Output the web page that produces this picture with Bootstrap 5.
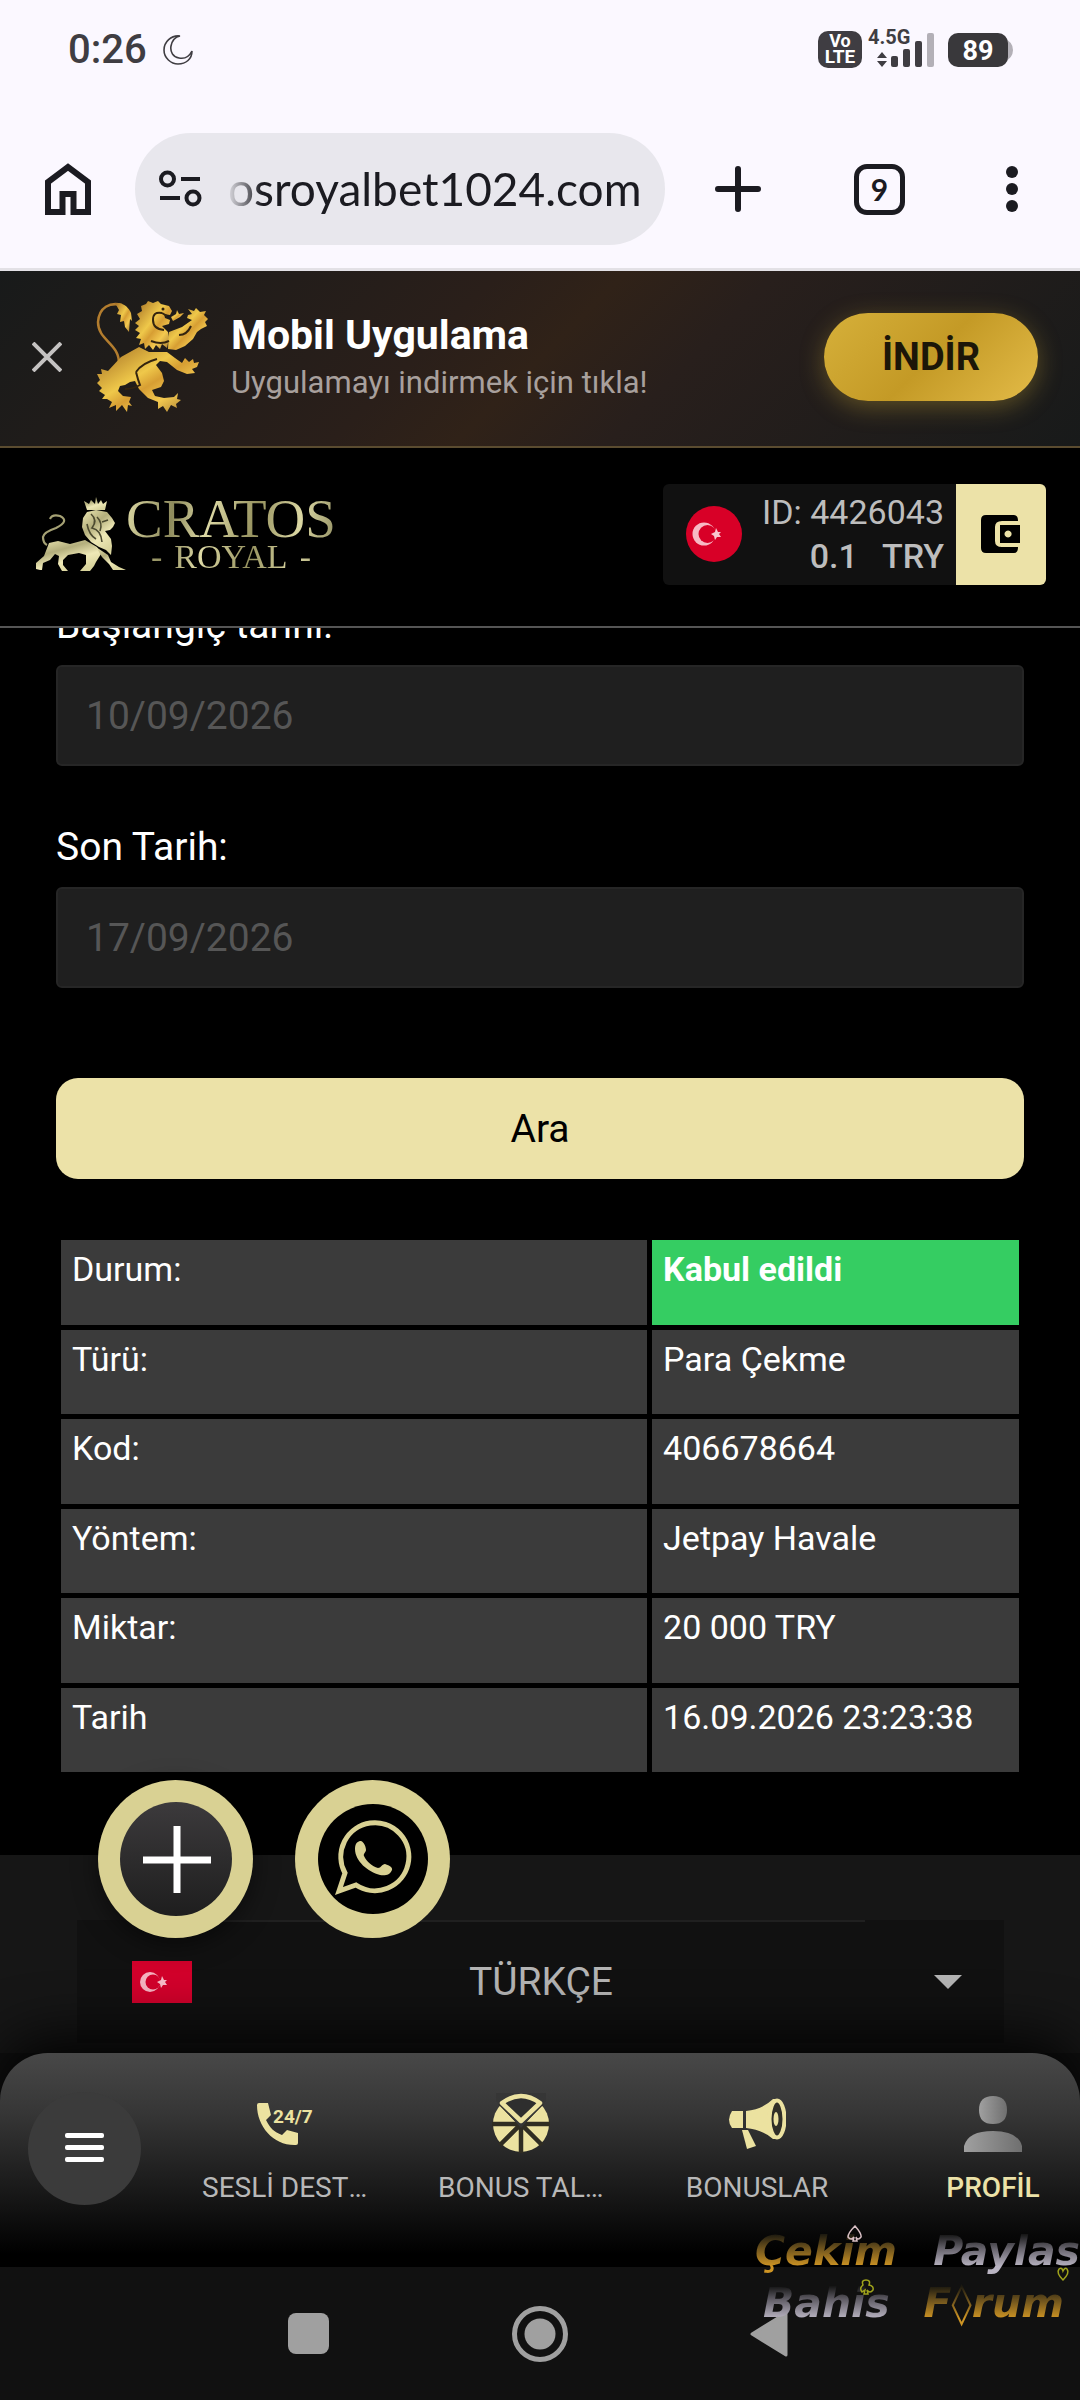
<!DOCTYPE html>
<html lang="tr">
<head>
<meta charset="utf-8">
<meta name="viewport" content="width=device-width, initial-scale=1">
<title>Cratos Royal</title>
<link href="https://cdn.jsdelivr.net/npm/bootstrap@5.3.0/dist/css/bootstrap.min.css" rel="stylesheet">
<style>
  body { font-family: Roboto, "Liberation Sans", sans-serif; background: #000; color: #fff; font-size: 34px; line-height: 44px; }
  svg { display: block; flex: none; }
  a { text-decoration: none; color: inherit; }
  button { border: 0; padding: 0; background: none; color: inherit; flex: none; }

  /* phone status bar and browser toolbar */
  .chrome-top { background: #fbf8ff; color: #1b1b21; border-bottom: 3px solid #e3e1e6; }
  .status-bar { height: 100px; padding: 0 66px 0 68px; color: #3f3d42; }
  .clock { font-size: 40px; font-weight: 500; }
  .status-icon { margin-bottom: 4px; }
  .status-icon text { font-family: Roboto, sans-serif; font-weight: 700; }
  .toolbar { height: 168px; padding: 10px 62px 0 45px; gap: 44px; }
  .tool-group { gap: 93px; padding-left: 6px; }
  .omnibox { height: 112px; border-radius: 56px; background: #e8e7ed; padding: 0 24px; }
  .url { font-family: Lato, sans-serif; font-size: 46px; line-height: 60px; width: 100%; text-align: right; border: 0; background: none; color: #1b1b21; outline: 0;
    -webkit-mask-image: linear-gradient(90deg, transparent 0, #000 36px); mask-image: linear-gradient(90deg, transparent 0, #000 36px); }
  .tabs-count { width: 51px; height: 51px; border: 5px solid #1b1b21; border-radius: 13px; font: 700 30px/40px Lato, sans-serif; }

  /* app install banner */
  .app-banner { height: 177px; padding: 0 42px 4px 32px; background: linear-gradient(135deg, #181a1a 0%, #2a1f1a 40%, #302218 50%, #281f1c 62%, #181a1a 100%); border-bottom: 2px solid #5b4c30; }
  .banner-lion { margin: 0 23px 0 34px; }
  .banner-title { font-size: 41px; font-weight: 700; line-height: 52px; }
  .banner-sub { font-size: 31px; line-height: 44px; color: #a8a09d; }
  .btn-get { width: 214px; height: 88px; border-radius: 44px; background: linear-gradient(135deg, #d6b03a, #c49a26 50%, #e3bb48); color: #1c1608; font-size: 38px; font-weight: 700; box-shadow: 0 6px 24px rgba(212, 175, 55, .35); }

  /* site header */
  .site-header { height: 180px; padding: 0 34px 6px 36px; border-bottom: 2px solid #555; }
  .brand-text { font-family: "Liberation Serif", serif; background: linear-gradient(100deg, #ddd9a4, #8d8a5c 22%, #dedaa6 38%, #96925f 60%, #dbd7a3 80%, #8b885c); -webkit-background-clip: text; background-clip: text; color: transparent; }
  .brand-main { font-size: 55px; line-height: 46px; }
  .brand-sub { font-size: 34px; line-height: 30px; gap: 12px; }
  .account { height: 101px; background: #111; border-radius: 6px; overflow: hidden; color: #bdbdbd; }
  .account-flag { margin: 0 20px 0 23px; }
  .wallet { width: 90px; background: #ece2a8; }

  /* search form and result table */
  .history { overflow: hidden; padding: 0 56px 78px; }
  .scrolled { margin-top: -25px; }
  .field-label { font-size: 39px; line-height: 44px; margin-bottom: 18px; display: block; }
  .date-input, .date-input:focus { height: 101px; border: 2px solid #262626; border-radius: 6px; background: #1f1f1f; color: #565656; font-size: 39px; padding: 0 28px; box-shadow: none; }
  .field-gap { margin-top: 59px; }
  .btn-search { height: 101px; margin-top: 90px; border-radius: 22px; background: #ece2a8; color: #000; font-size: 39px; }
  .result { width: 100%; height: 542px; margin-top: 56px; border-collapse: separate; border-spacing: 5px; table-layout: fixed; }
  .result th, .result td { background: #3b3b3b; vertical-align: top; padding: 7px 11px; font-weight: 400; }
  .result th { width: 61.5%; }
  .result .accepted { background: #35cd62; font-weight: 700; }

  /* footer with the language picker */
  .site-footer { background: #161616; padding: 65px 76px 10px 77px; }
  .lang-box { height: 123px; padding: 0 42px 0 55px; background: #111; }
  .lang-box::before { content: ""; position: absolute; top: 0; left: 15%; right: 15%; height: 2px; background: #202020; }
  .lang-select { appearance: none; border: 0; background: none; color: #b4b4b4; font-size: 39px; text-align: center; text-align-last: center; margin-right: 44px; min-width: 0; }
  .floaters { position: absolute; left: 98px; top: -75px; gap: 42px; z-index: 2; }
  .floater { width: 155px; height: 158px; border-radius: 50%; background: #d9d193; }
  .floater-dark { box-shadow: 0 6px 24px rgba(0, 0, 0, .5); }

  /* bottom navigation */
  .dock-wrap { background: #101010; }
  .dock { position: relative; height: 214px; border-radius: 48px 48px 0 0; background: linear-gradient(#484848, #363636 28%, #161616 68%, #000 94%); box-shadow: 0 -12px 60px #000; overflow: hidden; }
  .menu-btn { width: 113px; height: 113px; border-radius: 50%; background: #3b3b3b; margin: 0 26px 24px 28px; }
  .dock-item { flex: 0 0 236px; padding-top: 40px; font-size: 28px; line-height: 34px; color: #b8b8b8; }
  .dock-item svg { margin-bottom: 18px; }
  .dock-label { width: 166px; }
  .dock-item.current { color: #ece2a8; font-weight: 500; }
  .system-nav { height: 133px; background: #111; position: relative; padding: 0 290px 0 288px; }

  /* forum signature laid over the lower right corner */
  .forum-sign { position: absolute; right: 0; top: -42px; width: 325px; font: italic 700 41px/52px "DejaVu Sans", sans-serif; z-index: 3; pointer-events: none; }
  .gold, .silver { -webkit-background-clip: text; background-clip: text; color: transparent; }
  .gold { background-image: linear-gradient(#1d1a10 18%, #6e531d 45%, #cf9524 80%); }
  .silver { background-image: linear-gradient(#161616 18%, #65626b 45%, #b9b4c2 80%); }
  .forum-sign .suits { position: absolute; inset: 0; }
</style>
<script src="https://cdn.jsdelivr.net/npm/bootstrap@5.3.0/dist/js/bootstrap.bundle.min.js"></script>
</head>
<body class="d-flex flex-column min-vh-100">

<div class="chrome-top">
  <div class="status-bar d-flex align-items-center">
    <span class="clock">0:26</span>
    <svg class="ms-3" width="30" height="30" viewBox="0 0 30 30" fill="none" stroke="#3f3d42" stroke-width="1.6"><path d="M17 1C8 0 1 7 1 15s7 14 14 14c8 0 14-5 14-13-3 6-8 8-13 7C10 22 7 17 8 11c1-5 4-9 9-10z"/></svg>
    <svg class="status-icon ms-auto" width="196" height="44" viewBox="0 0 196 44">
      <rect x="0" y="5" width="44" height="37" rx="10" fill="#3f3d42"/>
      <text x="22" y="21" font-size="18" text-anchor="middle" fill="#fff">Vo</text>
      <text x="22" y="37" font-size="19" text-anchor="middle" fill="#fff">LTE</text>
      <text x="50" y="18" font-size="20" fill="#3f3d42">4.5G</text>
      <g fill="#3f3d42"><path d="M59 32l5-6 5 6zM59 35h10l-5 6z"/><rect x="73" y="30" width="7" height="11" rx="2"/><rect x="85" y="23" width="7" height="18" rx="2"/><rect x="97" y="15" width="7" height="26" rx="2"/></g>
      <rect x="109" y="7" width="7" height="34" rx="2" fill="#b3b0b7"/>
      <path d="M186 12q9 4 9 12t-9 12z" fill="#b3b0b7"/>
      <rect x="130" y="7" width="60" height="34" rx="10" fill="#39383b"/>
      <text x="160" y="34" font-size="27" text-anchor="middle" fill="#fff">89</text>
    </svg>
  </div>
  <div class="toolbar d-flex align-items-center">
    <button aria-label="Ana sayfa"><svg width="46" height="52" viewBox="0 0 46 52" fill="none" stroke="#1b1b21" stroke-width="6"><path d="M3 49V19L23 4l20 15v30H28.500V31h-11v18z"/></svg></button>
    <div class="omnibox d-flex align-items-center flex-grow-1">
      <svg width="43" height="38" viewBox="0 0 43 38" fill="none" stroke="#1b1b21" stroke-width="4"><circle cx="8.500" cy="9" r="6.500"/><path d="M22 9h19M1 28h20"/><circle cx="34" cy="28" r="6.500"/></svg>
      <input class="url ms-4" aria-label="Adres" value="osroyalbet1024.com" readonly>
    </div>
    <div class="tool-group d-flex align-items-center">
      <button aria-label="Yeni sekme"><svg width="46" height="46" viewBox="0 0 46 46" stroke="#1b1b21" stroke-width="6" stroke-linecap="round"><path d="M23 3v40M3 23h40"/></svg></button>
      <button aria-label="Sekmeler" class="tabs-count">9</button>
      <button aria-label="Menü" class="ps-2"><svg width="12" height="48" viewBox="0 0 12 48" fill="#1b1b21"><circle cx="6" cy="7" r="6"/><circle cx="6" cy="24" r="6"/><circle cx="6" cy="41" r="6"/></svg></button>
    </div>
  </div>
</div>

<div class="app-banner d-flex align-items-center">
  <button aria-label="Kapat"><svg width="30" height="30" viewBox="0 0 30 30" stroke="#c5c3c2" stroke-width="4"><path d="M1 1l28 28M29 1L1 29"/></svg></button>
  <svg class="banner-lion" width="112" height="112" viewBox="0 0 112 112">
    <defs><linearGradient id="goldLion" x1="0" y1="0" x2="1" y2="1"><stop offset="0" stop-color="#a06a22"/><stop offset=".42" stop-color="#efc84a"/><stop offset=".55" stop-color="#d79e33"/><stop offset=".72" stop-color="#f3c950"/><stop offset="1" stop-color="#94682a"/></linearGradient></defs>
    <path d="M23 64C24 42 2 40 2 21 3 6 14 1 26 4" fill="none" stroke="#b37d2e" stroke-width="2.500"/>
    <g fill="url(#goldLion)">
      <path d="M19 2c9-1 14 5 16 10l1 8-2-2-1 13-4-5-1-6-4 1 1-7-4-1 2-4z"/>
      <path d="M52 0l5 2 5-2 3 3 8 2 3 5-2 4-6-1 1 4 5 2-1 4-7 2 6 6 1 5 4 8-5-2-1 5-5-4-2 5-4-4-3 5-4-5-4 4-1-6-5 2 2-6-5-1 4-5-5-3 4-4-4-3 5-4-3-5 5-3-1-5 5-2z"/>
      <path d="M73 31l13-5 10-7-5-2 1-3 4-1-4-5 6 2 2-3 4 4 6-1-2 4 4 4-3 3 2 4-6 3-4 3-4 7-8 7-9 4-8-1z"/>
      <path d="M75 16l5-3 1-4 2 4 5-1-4 4-7 4z"/>
      <path d="M43 46l10 5h18l8 6 7 5 3-5 4 4 4-3 1 4 5-1-2 5-5 2 3 4-8 1-10-4-10-8-7-1-4 4 6 8 2 8-3 6-9 3 3 6 9 2 10-1 4-4-1 6 4 1-5 4 1 4-6-3-4 7-4-6-5 3 0-7-10-4-9-9-4-8-5 1-5 3-5 1-2 5 5 5 8 1-2 5 3 4-4-1-1 7-5-7-6 6 0-6-7 3 3-6-5-3-5 0 3-4-6-4 3-3-5-5 3-3-3-6 5 0-1-5 7 2 13-14z"/>
    </g>
    <path d="M66 12q-9-2-9 7t11 10M66 12l5 3M40 71q6-9 21-13M40 71q2 8 4 13-7 4-15 4M55 40q10 4 18 0M83 34q8 0 12-9" fill="none" stroke="#33240f" stroke-width="2"/>
    <circle cx="67" cy="8" r="1.500" fill="#33240f"/>
  </svg>
  <div>
    <div class="banner-title">Mobil Uygulama</div>
    <div class="banner-sub">Uygulamayı indirmek için tıkla!</div>
  </div>
  <button class="btn-get ms-auto">İNDİR</button>
</div>

<header class="site-header d-flex align-items-center">
  <a href="#" class="d-flex align-items-center" aria-label="Cratos Royal">
    <svg width="90" height="74" viewBox="0 0 90 74">
      <defs><linearGradient id="paleLion" x1="0" y1="0" x2=".6" y2="1"><stop offset="0" stop-color="#efe9b4"/><stop offset=".4" stop-color="#b3ae7c"/><stop offset=".7" stop-color="#eee8b6"/><stop offset="1" stop-color="#d9d49d"/></linearGradient></defs>
      <path d="M14 22q2-5 10-3 10 5-4 12-12 4-13 9 0 6 4 8" fill="none" stroke="#a5a174" stroke-width="2.200"/>
      <g fill="url(#paleLion)">
        <path d="M48 4l5 3 2-4 4 4 1-7 2 7 3-4 2 4 4-3-2 9H51z"/>
        <path d="M51 15l9-2 11 2 5 6 3 5-2 4-3 3-5 1 6 8 1 7-1 9-5-5-7-3-8-5-6-7-3-8 1-9z"/>
        <path d="M13 46l9-2 12 3 15-4 12 7 4 7-5 8-2 4-4 5h-10l6-7 0-9-7-2-11 2-5 5 0 5 5 6h-6l-4-7 1-8-4-2-5 6-7 3-1 7-2 0-4-1 0-6 8-7z"/>
        <path d="M60 50l12 8 3 7 8 5 7 3H77l-4-6-7-7z"/>
      </g>
      <path d="M55 17q7 6 1 14 9 2 10 14M61 20q6 6 3 14M51 27q2 11 9 15M66 25l6-2" fill="none" stroke="#4c4a30" stroke-width="1.600"/>
    </svg>
    <span class="brand-text d-flex flex-column align-items-center">
      <span class="brand-main">CRATOS</span>
      <span class="brand-sub d-flex"><span>-</span><span>ROYAL</span><span>-</span></span>
    </span>
  </a>
  <div class="account d-flex ms-auto">
    <svg class="account-flag align-self-center" width="56" height="56" viewBox="0 0 56 56"><circle cx="28" cy="28" r="28" fill="#d80027"/><circle cx="18" cy="28" r="11.500" fill="#f7b9c4"/><circle cx="21.500" cy="28" r="9" fill="#d80027"/><path d="M25 28l4-2 1-4 2 4h3l-2 2 2 3h-4l-2 3-1-4z" fill="#f9c6cf"/></svg>
    <div class="d-flex flex-column justify-content-center text-end pe-2 me-1">
      <div>ID: 4426043</div>
      <div class="fw-medium"><span class="me-4">0.1</span><span>TRY</span></div>
    </div>
    <button class="wallet d-flex align-items-center justify-content-center" aria-label="Cüzdan">
      <svg width="40" height="38" viewBox="0 0 40 38"><path d="M5 0h28q4 0 4 6H21q-7 0-7 6v14q0 6 7 6h16q0 6-4 6H5q-5 0-5-5V5q0-5 5-5z"/><path fill-rule="evenodd" d="M19 10h20v18H19zM27 15.500a3.500 3.500 0 1 0 .1 0z"/></svg>
    </button>
  </div>
</header>

<main class="history">
  <form class="scrolled d-flex flex-column" onsubmit="return false">
    <label class="field-label" for="from">Başlangıç tarihi:</label>
    <input class="form-control date-input" id="from" value="10/09/2026">
    <label class="field-label field-gap" for="to">Son Tarih:</label>
    <input class="form-control date-input" id="to" value="17/09/2026">
    <button class="btn-search w-100">Ara</button>
  </form>
  <table class="result">
    <tbody>
      <tr><th scope="row">Durum:</th><td class="accepted">Kabul edildi</td></tr>
      <tr><th scope="row">Türü:</th><td>Para Çekme</td></tr>
      <tr><th scope="row">Kod:</th><td>406678664</td></tr>
      <tr><th scope="row">Yöntem:</th><td>Jetpay Havale</td></tr>
      <tr><th scope="row">Miktar:</th><td>20 000 TRY</td></tr>
      <tr><th scope="row">Tarih</th><td>16.09.2026 23:23:38</td></tr>
    </tbody>
  </table>
</main>

<footer class="site-footer position-relative flex-grow-1">
  <div class="floaters d-flex">
    <button class="floater floater-dark d-flex align-items-center justify-content-center" aria-label="Ekle">
      <svg width="112" height="114" viewBox="0 0 112 114"><defs><linearGradient id="disc" x1="0" y1="0" x2="0" y2="1"><stop offset="0" stop-color="#3c3a3c"/><stop offset="1" stop-color="#1e1e1e"/></linearGradient></defs><ellipse cx="56" cy="57" rx="56" ry="57" fill="url(#disc)"/><path d="M57 24v67M23 58h68" stroke="#fff" stroke-width="7"/></svg>
    </button>
    <button class="floater d-flex align-items-center justify-content-center" aria-label="WhatsApp">
      <svg width="112" height="112" viewBox="0 0 112 112"><circle cx="56" cy="56" r="55"/><path d="M22 88l6-18a34 34 0 1 1 11 12z" fill="none" stroke="#d9d193" stroke-width="5"/><path d="M38 46c0-6 3-8 6-8 3 1 5 6 5 9 0 2-3 4-2 6 3 6 8 10 14 12 3 0 4-4 7-4 3 1 8 3 7 6-2 5-7 6-12 5-12-3-25-14-25-26z" fill="#d9d193"/></svg>
    </button>
  </div>
  <div class="lang-box position-relative d-flex align-items-center">
    <svg width="60" height="42" viewBox="0 0 60 42"><rect width="60" height="42" fill="#d2002b"/><circle cx="18" cy="21" r="10" fill="#f5b3c0"/><circle cx="21" cy="21" r="7.500" fill="#d2002b"/><path d="M25 21l4-2 1-4 2 4h3l-2 2 2 3h-4l-2 3-1-4z" fill="#f7bcc8"/></svg>
    <select class="lang-select flex-grow-1" aria-label="Dil"><option>TÜRKÇE</option></select>
    <svg width="28" height="14" viewBox="0 0 28 14"><path d="M0 0h28L14 14z" fill="#b4b4b4"/></svg>
  </div>
</footer>

<div class="dock-wrap">
  <nav class="dock d-flex align-items-stretch">
    <button class="menu-btn d-flex align-items-center justify-content-center align-self-center" aria-label="Menü">
      <svg width="39" height="30" viewBox="0 0 39 30" fill="#fff"><rect width="39" height="5" rx="2"/><rect y="12" width="39" height="5" rx="2"/><rect y="24" width="39" height="5" rx="2"/></svg>
    </button>
    <div class="d-flex flex-grow-1 overflow-hidden">
      <a href="#" class="dock-item d-flex flex-column align-items-center">
        <svg width="58" height="60" viewBox="0 0 58 60" fill="#ece2a0"><path d="M3 10h9l3 12-5 5c4 8 8 12 16 15l5-5 11 3v10q0 2-2 2C18 53 1 34 1 12q0-2 2-2z"/><text x="17" y="30" font-family="Roboto" font-weight="700" font-size="19">24/7</text></svg>
        <span class="dock-label text-center text-truncate">SESLİ DESTEK</span>
      </a>
      <a href="#" class="dock-item d-flex flex-column align-items-center">
        <svg width="58" height="60" viewBox="0 0 58 60"><circle cx="29" cy="31" r="28" fill="#ece2a0"/><path d="M29 31v29M0 31h58M8 10l42 42M50 10L8 52" stroke="#302d22" stroke-width="4.500"/><path d="M4 8L29 35 54 8V0H4z" fill="#363636"/><path d="M10 10Q29-4 48 10L29 28z" fill="#2e2e2e" stroke="#ece2a0" stroke-width="4.500" stroke-linejoin="round"/></svg>
        <span class="dock-label text-center text-truncate">BONUS TALEP</span>
      </a>
      <a href="#" class="dock-item d-flex flex-column align-items-center">
        <svg width="58" height="60" viewBox="0 0 58 60"><g fill="#ece2a0"><path d="M4 18h11v17H4q-6-8 0-17z"/><path d="M18 18Q35 16 45 6h5v40h-5Q35 37 18 35z"/><path d="M14 37h6l8 16-9 3z"/></g><ellipse cx="49" cy="26" rx="7.500" ry="18.500" fill="#302e27" stroke="#ece2a0" stroke-width="4"/><ellipse cx="48" cy="26" rx="2.500" ry="7" fill="#ece2a0"/></svg>
        <span class="dock-label text-center text-truncate">BONUSLAR</span>
      </a>
      <a href="#" class="dock-item current d-flex flex-column align-items-center" aria-current="page">
        <svg width="58" height="60" viewBox="0 0 58 60"><defs><linearGradient id="man"><stop offset="0" stop-color="#a0a0a0"/><stop offset="1" stop-color="#6f6f6f"/></linearGradient></defs><g fill="url(#man)"><path d="M15 17Q15 3 29 3t14 14-14 14-14-14z"/><path d="M0 59v-6q4-15 29-15t29 15v6z"/></g></svg>
        <span class="dock-label text-center text-truncate">PROFİL</span>
      </a>
    </div>
  </nav>
</div>

<div class="system-nav d-flex align-items-center justify-content-between">
  <button aria-label="Son uygulamalar"><svg width="41" height="41" viewBox="0 0 41 41"><rect width="41" height="41" rx="8" fill="#a0a0a0"/></svg></button>
  <button aria-label="Ana ekran"><svg width="58" height="58" viewBox="0 0 58 58"><circle cx="29" cy="29" r="25.500" fill="none" stroke="#a0a0a0" stroke-width="5"/><circle cx="29" cy="29" r="15.500" fill="#a0a0a0"/></svg></button>
  <button aria-label="Geri"><svg width="40" height="46" viewBox="0 0 40 46"><path d="M2 23L36 2v42z" fill="#a0a0a0" stroke="#a0a0a0" stroke-width="3" stroke-linejoin="round"/></svg></button>
  <div class="forum-sign">
    <div class="d-flex justify-content-between"><span class="gold">Çekim</span><span class="silver">Paylas</span></div>
    <div class="d-flex justify-content-between ps-2 pe-3"><span class="silver">Bahis</span><span class="gold">F◊rum</span></div>
    <svg class="suits" width="325" height="104" viewBox="0 0 325 104" fill="none" stroke-width="1.500"><path d="M100 1q7 8 6 11-3 4-5 0l1 4h-4l1-4q-3 4-6 0 0-4 7-11z" stroke="#d8bfc4"/><path d="M107 67q-3-4 1-7-2-5 3-5t3 5q5 1 4 5-3 4-6 0l1 4h-4l1-4z" stroke="#a0a41c"/><path d="M308 55q-7-7-4-11 3-2 4 2 2-4 4-2 3 4-4 11z" stroke="#a0a41c"/></svg>
  </div>
</div>
</body>
</html>
